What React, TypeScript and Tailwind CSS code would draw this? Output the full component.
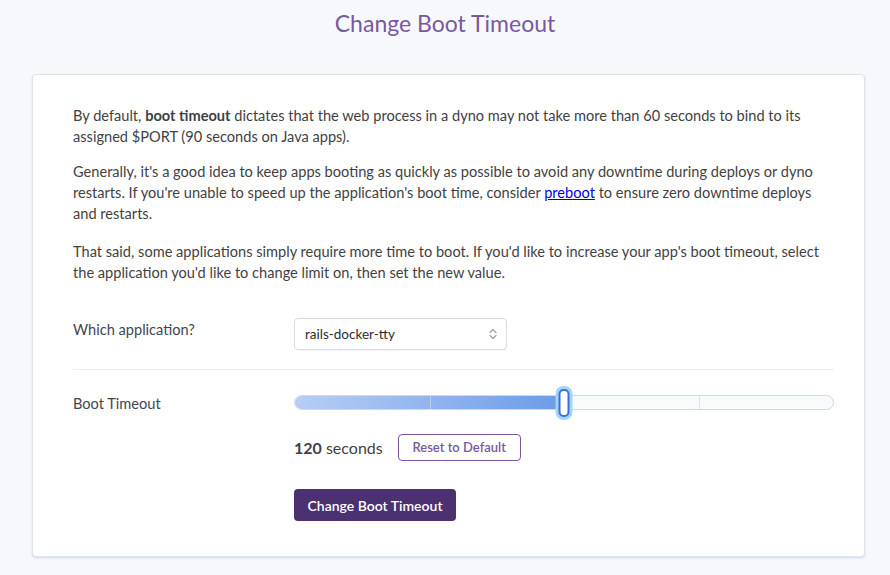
import React from 'react';

const font = { fontFamily: 'Lato, "Open Sans", sans-serif' };

const BootSlider: React.FC<{ percent: number }> = ({ percent }) => {
  return (
    <div className="relative h-[34px] w-[540px]">
      <div className="absolute left-0 right-0 top-[9px] h-[15px] rounded-full border border-[#cfd8e8] bg-[#f9fafc] overflow-hidden">
        <div
          className="absolute left-0 top-0 bottom-0 bg-gradient-to-r from-[#b7cef4] to-[#6c9be8] border-r border-[#6c9be8]"
          style={{ width: `${percent}%` }}
        />
        <div className="absolute top-0 bottom-0 left-[25%] w-px bg-[#c9d6ee]/70" />
        <div className="absolute top-0 bottom-0 left-[75%] w-px bg-[#dde3ee]" />
      </div>
      <div
        className="absolute top-0 h-[34px] w-[17px] -translate-x-1/2 rounded-[8px] bg-[#a3d5f6] p-[3px]"
        style={{ left: `${percent}%` }}
      >
        <div className="h-full w-full rounded-[5px] border-2 border-[#3c6fdb] bg-white" />
      </div>
    </div>
  );
};

export default function App() {
  return (
    <div className="min-h-[575px] bg-[#f7f8fb] pb-[19px] text-[#3f3f44]" style={font}>
      <h1 className="pt-[8px] text-center text-[23px] leading-[31px] text-[#79589f]">Change Boot Timeout</h1>
      <div className="ml-[32px] mr-[25px] mt-[35px] rounded-[4px] border border-[#e1e4ec] bg-white pl-[40px] pr-[30px] pt-[30px] pb-[35px] shadow-[0_1px_2px_rgba(180,190,210,0.6)]">
        <div className="text-[14.6px] leading-[21px]">
          <p>
            By default, <b className="font-bold">boot timeout</b> dictates that the web process in a dyno may not take more than 60 seconds to bind to its assigned $PORT (90 seconds on Java apps).
          </p>
          <p className="mt-[14px]">
            Generally, it's a good idea to keep apps booting as quickly as possible to avoid any downtime during deploys or dyno restarts. If you're unable to speed up the application's boot time, consider{' '}
            <a href="#" className="text-[#0000ee] underline">preboot</a> to ensure zero downtime deploys and restarts.
          </p>
          <p className="mt-[17px]">
            That said, some applications simply require more time to boot. If you'd like to increase your app's boot timeout, select the application you'd like to change limit on, then set the new value.
          </p>
        </div>

        <div className="mt-[35px] flex border-b border-[#ebedf2] pb-[19px]">
          <div className="w-[221px] shrink-0 pt-[2px] text-[14.6px] leading-[20px] text-[#3f4652]">Which application?</div>
          <div className="flex h-[32px] w-[213px] shrink-0 items-center justify-between rounded-[4px] border border-[#d6dbe6] bg-white pl-[10px] pr-[8px] shadow-[0_1px_1px_rgba(0,0,0,0.04)]">
            <span className="text-[13.5px] text-[#2c2c31]">rails-docker-tty</span>
            <svg width="10" height="12" viewBox="0 0 10 12" fill="none" stroke="#9aa3b2" strokeWidth="1.2" strokeLinecap="round" strokeLinejoin="round">
              <path d="M2 4.5L5 1.5L8 4.5" />
              <path d="M2 7.5L5 10.5L8 7.5" />
            </svg>
          </div>
        </div>

        <div className="flex pt-[16px]">
          <div className="w-[221px] shrink-0 pt-[8px] text-[14.6px] leading-[20px] text-[#3f4652]">Boot Timeout</div>
          <div className="flex shrink-0 flex-col">
            <BootSlider percent={50} />
            <div className="mt-[14px] flex items-center gap-[15px]">
              <span className="text-[16px]"><b className="font-bold">120</b> seconds</span>
              <button className="h-[27px] w-[123px] rounded-[4px] border border-[#79589f] text-[13px] font-semibold text-[#79589f]">
                Reset to Default
              </button>
            </div>
            <div className="mt-[28px]">
              <button className="h-[32px] w-[162px] rounded-[4px] bg-[#4b3170] text-[14px] font-semibold text-white">
                Change Boot Timeout
              </button>
            </div>
          </div>
        </div>
      </div>
    </div>
  );
}
